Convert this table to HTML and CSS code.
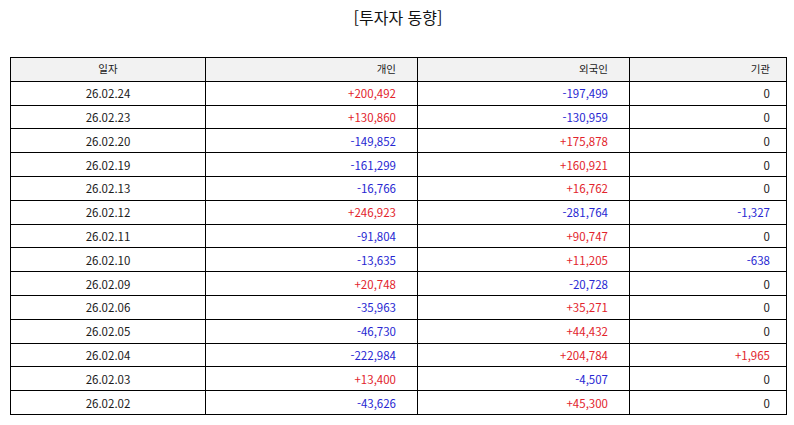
FILE: index.html
```
<!DOCTYPE html>
<html lang="ko">
<head>
<meta charset="utf-8">
<link rel="stylesheet" href="styles.css">
</head>
<body>
<h1 class="title">[투자자 동향]</h1>
<table class="grid">
  <colgroup>
    <col class="c-date"><col class="c-ind"><col class="c-for"><col class="c-inst">
  </colgroup>
  <thead>
    <tr><th class="center">일자</th><th class="num">개인</th><th class="num">외국인</th><th class="num last">기관</th></tr>
  </thead>
  <tbody>
    <tr><td class="center">26.02.24</td><td class="num up">+200,492</td><td class="num down">-197,499</td><td class="num last">0</td></tr>
    <tr><td class="center">26.02.23</td><td class="num up">+130,860</td><td class="num down">-130,959</td><td class="num last">0</td></tr>
    <tr><td class="center">26.02.20</td><td class="num down">-149,852</td><td class="num up">+175,878</td><td class="num last">0</td></tr>
    <tr><td class="center">26.02.19</td><td class="num down">-161,299</td><td class="num up">+160,921</td><td class="num last">0</td></tr>
    <tr><td class="center">26.02.13</td><td class="num down">-16,766</td><td class="num up">+16,762</td><td class="num last">0</td></tr>
    <tr><td class="center">26.02.12</td><td class="num up">+246,923</td><td class="num down">-281,764</td><td class="num last down">-1,327</td></tr>
    <tr><td class="center">26.02.11</td><td class="num down">-91,804</td><td class="num up">+90,747</td><td class="num last">0</td></tr>
    <tr><td class="center">26.02.10</td><td class="num down">-13,635</td><td class="num up">+11,205</td><td class="num last down">-638</td></tr>
    <tr><td class="center">26.02.09</td><td class="num up">+20,748</td><td class="num down">-20,728</td><td class="num last">0</td></tr>
    <tr><td class="center">26.02.06</td><td class="num down">-35,963</td><td class="num up">+35,271</td><td class="num last">0</td></tr>
    <tr><td class="center">26.02.05</td><td class="num down">-46,730</td><td class="num up">+44,432</td><td class="num last">0</td></tr>
    <tr><td class="center">26.02.04</td><td class="num down">-222,984</td><td class="num up">+204,784</td><td class="num last up">+1,965</td></tr>
    <tr><td class="center">26.02.03</td><td class="num up">+13,400</td><td class="num down">-4,507</td><td class="num last">0</td></tr>
    <tr><td class="center">26.02.02</td><td class="num down">-43,626</td><td class="num up">+45,300</td><td class="num last">0</td></tr>
  </tbody>
</table>
</body>
</html>
```
FILE: styles.css
```
html, body {
  margin: 0;
  padding: 0;
  background: #fff;
}
body {
  font-family: "Noto Sans CJK KR", "Noto Sans", sans-serif;
  color: #1a1a1a;
  padding: 0 8px 0 10px;
}
.title {
  margin: 0;
  padding-top: 6px;
  height: 57px;
  box-sizing: border-box;
  font-size: 16px;
  font-weight: 400;
  line-height: 22px;
  text-align: center;
  color: #111;
}
.grid {
  border-collapse: collapse;
  width: 777px;
  table-layout: fixed;
  font-size: 11.5px;
}
.c-date { width: 195px; }
.c-ind { width: 212px; }
.c-for { width: 212px; }
.c-inst { width: 157px; }
.grid th, .grid td {
  border: 1px solid #000;
  height: 22.8px;
  padding: 0;
  font-weight: 400;
  line-height: 14px;
  white-space: nowrap;
}
.grid th {
  background: #f2f2f2;
  font-size: 10.5px;
}
.center { text-align: center; }
.num { text-align: right; padding-right: 21px !important; }
.num.last { padding-right: 16px !important; }
.up { color: #e2242c; }
.down { color: #2727d2; }
```
